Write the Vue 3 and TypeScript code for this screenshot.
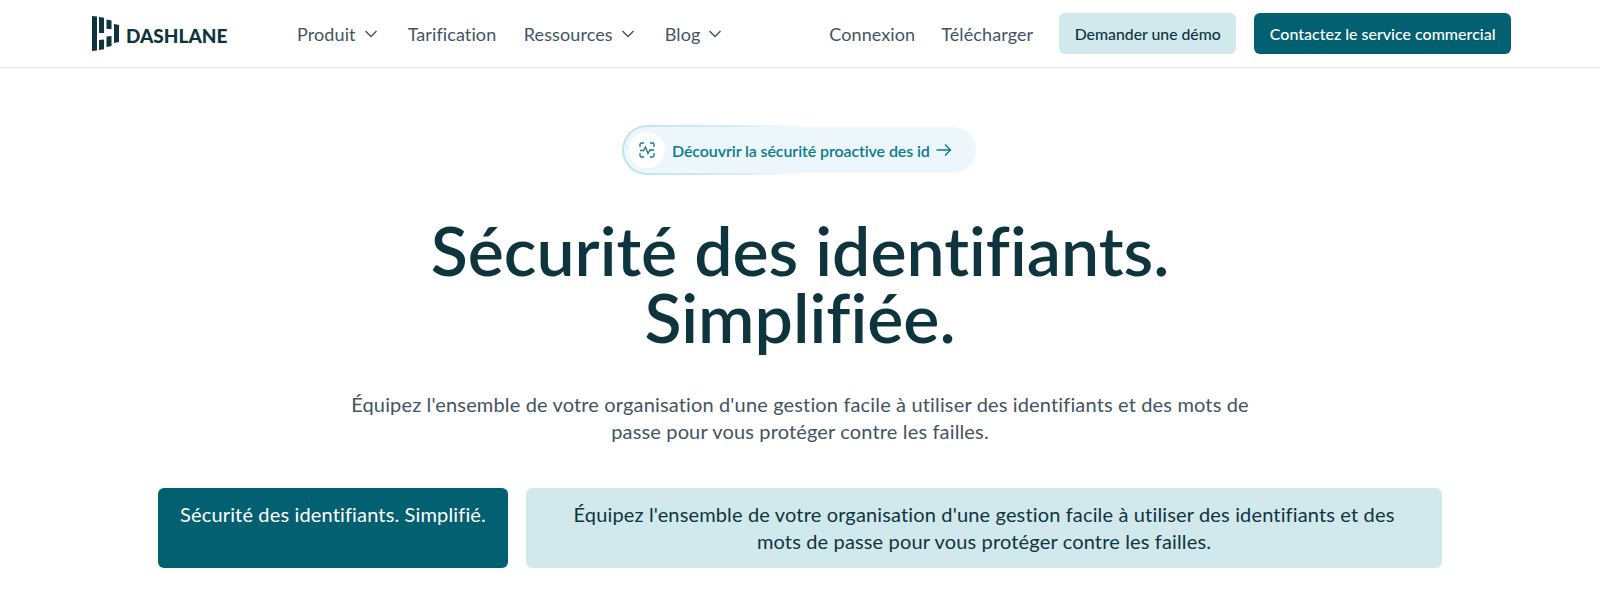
<script setup lang="ts">
const navLinks = [
  { label: 'Produit', caret: true },
  { label: 'Tarification', caret: false },
  { label: 'Ressources', caret: true },
  { label: 'Blog', caret: true },
]
</script>

<template>
  <div class="page">
    <header class="nav">
      <a class="brand">
        <svg class="brand-mark" width="27" height="35" viewBox="0 0 27 35" fill="#0e353d">
          <path d="M0 0l5 .6V34.400L0 35z" />
          <path d="M7 1l5 .7V17H7zM7 24l5-.4v9.700l-5 .7z" />
          <path d="M14.500 3.500l5 .9v8.800l-5-.4zM14.500 20.500l5-.4v10l-5 .9z" />
          <path d="M22 8l5 1v17l-5 1z" />
        </svg>
        <span class="brand-name">DASHLANE</span>
      </a>
      <nav class="links">
        <a v-for="link in navLinks" :key="link.label" class="link">
          {{ link.label }}
          <svg v-if="link.caret" class="caret" width="14" height="8" viewBox="0 0 14 8" fill="none" stroke="#43545f" stroke-width="1.400">
            <path d="M1.500 1l5.500 5.500L12.500 1" />
          </svg>
        </a>
      </nav>
      <div class="actions">
        <a class="link">Connexion</a>
        <a class="link">Télécharger</a>
        <a class="btn btn-light">Demander une démo</a>
        <a class="btn btn-dark">Contactez le service commercial</a>
      </div>
    </header>

    <main class="hero">
      <a class="pill">
        <span class="pill-icon">
          <svg width="16" height="16" viewBox="0 0 16 16" fill="none" stroke="#0a7c8c" stroke-width="1.300">
            <path d="M1 5V2.500A1.500 1.500 0 0 1 2.500 1H5M11 1h2.500A1.500 1.500 0 0 1 15 2.500V5M15 11v2.500a1.500 1.500 0 0 1-1.500 1.500H11M5 15H2.500A1.500 1.500 0 0 1 1 13.500V11" />
            <path d="M1 8.500h3.500L6.500 5l2.500 6.500 2-3.500h4" />
          </svg>
        </span>
        <span class="pill-text">Découvrir la sécurité proactive des id</span>
        <svg width="16" height="14" viewBox="0 0 16 14" fill="none" stroke="#0a7c8c" stroke-width="1.400">
          <path d="M0.500 7h14M9 1.500L14.500 7 9 12.500" />
        </svg>
      </a>

      <h1 class="title">Sécurité des identifiants.<br />Simplifiée.</h1>
      <p class="lead">
        Équipez l'ensemble de votre organisation d'une gestion facile à utiliser des identifiants et des mots de
        passe pour vous protéger contre les failles.
      </p>

      <div class="cards">
        <div class="card card-dark">Sécurité des identifiants. Simplifié.</div>
        <div class="card card-light">
          Équipez l'ensemble de votre organisation d'une gestion facile à utiliser des identifiants et des
          mots de passe pour vous protéger contre les failles.
        </div>
      </div>
    </main>
  </div>
</template>

<style>
html,
body {
  margin: 0;
}
</style>

<style scoped>
.page {
  font-family: Lato, 'Noto Sans', sans-serif;
  font-variant-ligatures: none;
  width: 1600px;
  height: 614px;
  overflow: hidden;
  color: #43545f;
}

.nav {
  display: flex;
  align-items: center;
  height: 67px;
  padding: 0 89px 0 92px;
  border-bottom: 1px solid #dfe3e6;
  box-sizing: content-box;
}

.brand {
  display: flex;
  align-items: center;
  gap: 7px;
  width: 205px;
  flex: none;
}

.brand-mark {
  flex: none;
}

.brand-name {
  font-size: 19px;
  font-weight: 900;
  color: #0e353d;
  margin-top: 4px;
}

.links {
  display: flex;
  gap: 27.500px;
}

.link {
  display: flex;
  align-items: center;
  gap: 8px;
  font-size: 18px;
  letter-spacing: 0.1px;
  white-space: nowrap;
}

.caret {
  margin-right: 2.500px;
}

.actions {
  display: flex;
  align-items: center;
  margin-left: auto;
  gap: 26px;
}

.btn {
  display: flex;
  align-items: center;
  height: 41px;
  padding: 0 15.500px;
  border-radius: 6px;
  font-size: 15.800px;
  font-weight: 500;
  white-space: nowrap;
}

.btn-light {
  background: #d1e8ed;
  color: #0e353d;
}

.btn-dark {
  background: #036070;
  color: #fff;
  font-size: 16px;
  margin-left: -8px;
}

.hero {
  display: flex;
  flex-direction: column;
  align-items: center;
}

.pill {
  position: relative;
  display: flex;
  align-items: center;
  width: 352px;
  height: 46px;
  margin-top: 59px;
  padding: 0 0 0 5px;
  box-sizing: border-box;
  border-radius: 23px;
  background: #edf7fb;
  color: #0a7c8c;
}

.pill::before {
  content: '';
  position: absolute;
  z-index: -1;
  left: -2px;
  top: -2px;
  bottom: -2px;
  width: 185px;
  border-radius: 25px 0 0 25px;
  background: linear-gradient(90deg, #bfe3ee 0%, #d3ecf3 60%, rgba(237, 247, 251, 0) 100%);
}

.pill-icon {
  display: flex;
  align-items: center;
  justify-content: center;
  width: 36px;
  height: 36px;
  border-radius: 50%;
  background: #fff;
}

.pill-text {
  margin: 0 6px 0 7px;
  font-size: 16px;
  font-weight: 600;
  letter-spacing: -0.1px;
  white-space: nowrap;
}

.title {
  margin: 43px 0 0;
  font-size: 68px;
  line-height: 67px;
  font-weight: 600;
  text-align: center;
  color: #0e353d;
}

.lead {
  width: 920px;
  margin: 41px 0 0;
  font-size: 20px;
  line-height: 27px;
  letter-spacing: 0.15px;
  text-align: center;
}

.cards {
  display: flex;
  gap: 18px;
  margin-top: 43px;
  width: 1284px;
}

.card {
  height: 80px;
  border-radius: 6px;
  padding: 13px 20px;
  box-sizing: border-box;
  font-size: 20px;
  line-height: 27px;
  letter-spacing: 0.15px;
  text-align: center;
}

.card-dark {
  width: 350px;
  flex: none;
  background: #036070;
  color: #fff;
}

.card-light {
  flex: 1;
  padding: 13px 40px;
  background: #d1e8ed;
  color: #0e353d;
}
</style>
